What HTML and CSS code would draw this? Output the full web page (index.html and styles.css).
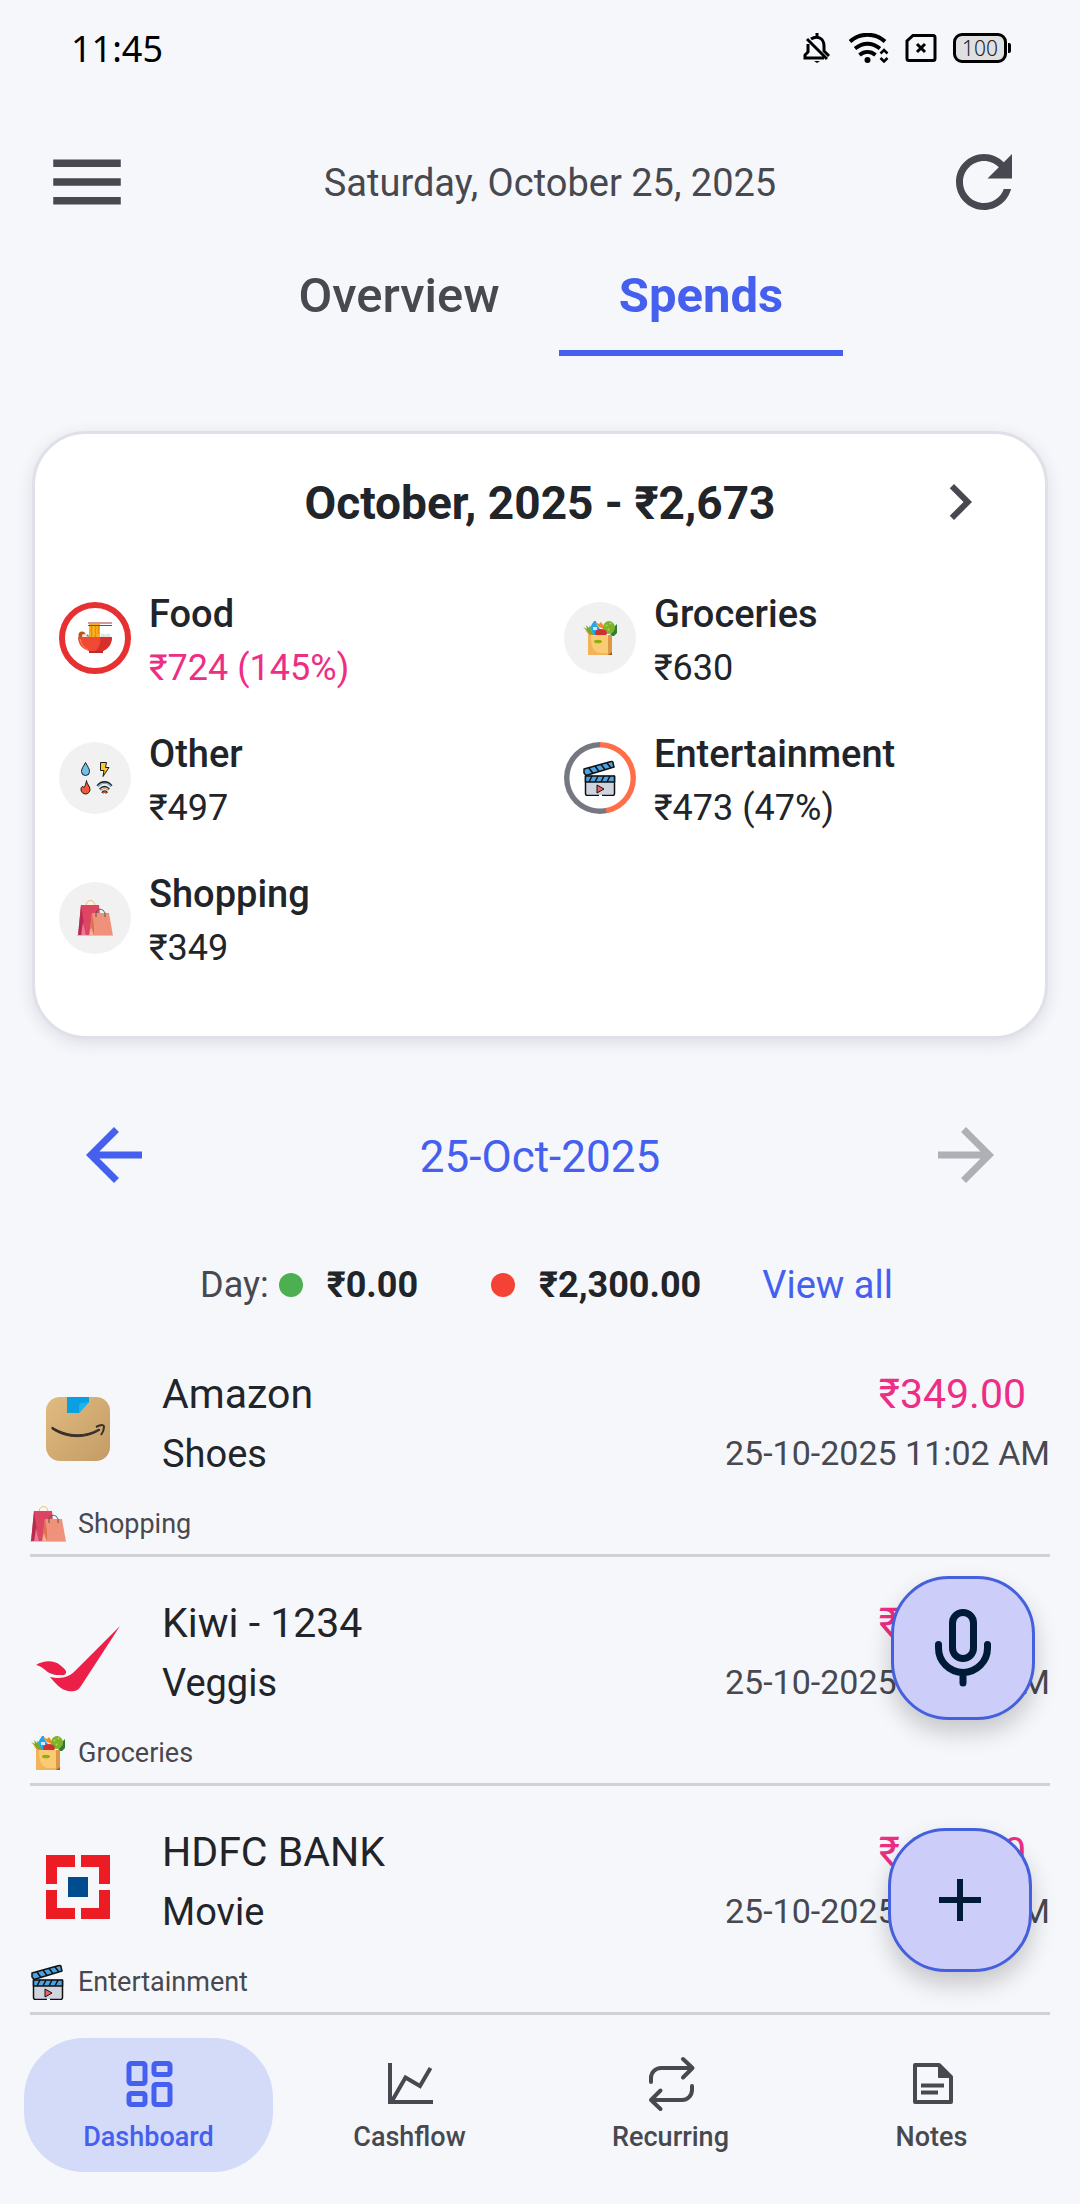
FILE: index.html
```html
<!DOCTYPE html>
<html lang="en">
<head>
<meta charset="utf-8">
<meta name="viewport" content="width=device-width, initial-scale=1">
<title>Spends</title>
<link rel="stylesheet" href="styles.css">
</head>
<body>
<svg class="sprite" aria-hidden="true">
  <symbol id="food" viewBox="0 0 36 36">
    <path d="M12 4h11v14H12z" fill="#f9b01e"/>
    <path d="M14 5l1 3-1 3 1 3-1 3M18 5l1 3-1 3 1 3-1 3M21 5l1 3-1 3 1 3" fill="none" stroke="#dd8410" stroke-width="1"/>
    <path d="M11 3h24M11 5.500h24" stroke="#a8352f" stroke-width="1"/>
    <circle cx="5" cy="15" r="3.500" fill="#b3591d"/>
    <circle cx="7" cy="16" r="2" fill="#fbe9df"/>
    <path d="M9 16l2-2 1 3z" fill="#4c9a3c"/>
    <circle cx="26" cy="16" r="2.500" fill="#dfe3e6"/><circle cx="31" cy="16" r="2.500" fill="#dfe3e6"/>
    <path d="M1 17h34c0 7-4 12-9 14v2H12v-2C5 29 1 24 1 17z" fill="#f04a35"/>
    <path d="M23 17h12c0 7-4 12-9 14h-8c4-3 6-8 5-14z" fill="#d7302c"/>
    <path d="M3 19c1 5 4 9 8 11" fill="none" stroke="#ff8165" stroke-width="1"/>
    <path d="M12 31h14v2H12z" fill="#b92c2b"/>
  </symbol>
  <symbol id="groceries" viewBox="0 0 36 36">
    <path d="M1 7l4 2-1-4 3 3 1-3 1 5 3 5H7L5 11z" fill="#78a81e"/>
    <path d="M3 10l9 6H8z" fill="#f28c1c"/>
    <path d="M10 4l2-3h2l1 4 3 4v7h-6l-4-8z" fill="#24a5ec"/>
    <path d="M11 7h4v3h-4z" fill="#c9edff"/>
    <path d="M13 2l4 2 2-2 2 3 3 5-7-3z" fill="#f58a20"/>
    <path d="M31 8l4-4v9l-3 3h-4z" fill="#2f7d32"/>
    <ellipse cx="27" cy="7.500" rx="6" ry="6.500" fill="#7db32b"/>
    <path d="M24 5l1 1M28 3l1 1M26 9l1 1" stroke="#b2d957" stroke-width="2"/>
    <ellipse cx="19" cy="13" rx="6" ry="4" fill="#d1302f"/>
    <path d="M6 15h24v20H6z" fill="#fbcb73"/>
    <path d="M26 15h4v20h-4z" fill="#dd9846"/>
    <path d="M6 15h3c0 11 2 16 8 18h9v2H6z" fill="#f1b45a"/>
    <path d="M26 35l4-3v3z" fill="#a9562a"/>
    <ellipse cx="16" cy="21.500" rx="4" ry="1.800" fill="#8fae0f"/>
  </symbol>
  <symbol id="other" viewBox="0 0 36 36">
    <g stroke="#1c1c1c" stroke-width="1" stroke-linejoin="round">
      <path d="M8.500 2.500c2 4 4 6 4 9a4 4 0 0 1-8 0c0-3 2-5 4-9z" fill="#6fc0ec"/>
      <path d="M23.500 2.500h6l-1 5h3.500l-6 9 1-6h-3.500z" fill="#f8c92b"/>
      <path d="M9.500 20.500c0 4 3.500 5 3.500 9a4.500 4.500 0 0 1-9 0c0-3 2-4 3-2 1-1 2-4 2.500-7z" fill="#f2593a"/>
    </g>
    <g fill="none" stroke-width="2.600" stroke="#1c1c1c">
      <path d="M20.500 26c4-5 10-5 14 0M23 29.500c3-3 6-3 9 0M25.500 33c1-2 3-2 4.500 0"/>
    </g>
    <g fill="none" stroke-width="1.200">
      <path d="M21 26c4-4 9-4 13 0" stroke="#79c2ee"/>
      <path d="M23.500 29.500c3-2.500 5-2.500 8 0" stroke="#ffd9a0"/>
      <path d="M26 33c1-1.500 2.500-1.500 3.500 0" stroke="#f2593a"/>
    </g>
  </symbol>
  <symbol id="shopping" viewBox="0 0 36 36">
    <path d="M9 9V5c1-6 8-6 9 0v4" fill="none" stroke="#eec068" stroke-width="1"/>
    <path d="M4 5h18l3 31H1z" fill="#dc4663"/>
    <path d="M4 5l3 20-2 11H1z" fill="#b62c50"/>
    <path d="M6 22l3 14H4z" fill="#ed7894"/>
    <path d="M15 13h17l4 23H12z" fill="#f0917b"/>
    <path d="M15 13l2 12v11h-5z" fill="#e07054"/>
    <path d="M14 27l3 9h-5z" fill="#f7b29c"/>
    <path d="M19 17v-4c1-5 7-5 9 0v4" fill="none" stroke="#446341" stroke-width="1"/>
    <path d="M0 35.500h36" stroke="#f6b6aa" stroke-width="1"/>
  </symbol>
  <symbol id="entertainment" viewBox="0 0 36 36">
    <g stroke="#111" stroke-width="1.500" stroke-linejoin="round">
      <path d="M3.500 16.500h29v17a2 2 0 0 1-2 2h-25a2 2 0 0 1-2-2z" fill="#d0d4df"/>
      <path d="M3.500 16h29v6h-29z" fill="#4ba3e3"/>
      <path d="M2 9L29 1.500a1.500 1.500 0 0 1 2 1.500l1 4L4 15.500 2 13z" fill="#4ba3e3"/>
      <path d="M7 22l3-6M13 22l3-6M19 22l3-6M25 22l3-6M7 8l4 5.500M13 6l4 5.500M19 4.500l4 5M25 3l4 5" fill="none"/>
      <path d="M15 25v8l7-4z" fill="#ee6063" stroke-width="1"/>
    </g>
    <path d="M17 35.500h3" stroke="#fff" stroke-width="2"/>
  </symbol>
  <symbol id="arrow-back" viewBox="0 0 24 24">
    <path d="M20 11H7.830l5.590-5.590L12 4l-8 8 8 8 1.410-1.410L7.830 13H20v-2z"/>
  </symbol>
  <symbol id="arrow-forward" viewBox="0 0 24 24">
    <path d="M12 4l-1.410 1.410L16.170 11H4v2h12.170l-5.580 5.590L12 20l8-8z"/>
  </symbol>
</svg>

<div class="app">
  <div class="status">
    <span class="clock">11:45</span>
    <div class="status-icons">
      <svg width="30" height="30" viewBox="0 0 30 30" fill="none" stroke="#000" stroke-width="3">
        <path d="M14 0v4M8 6c6-4 13-1 13 7v5l5 5M5 11v8l-3 3v3h19M4 6l20 20"/>
        <path d="M11 28h6l-3 2z" fill="#000" stroke="none"/>
      </svg>
      <svg width="40" height="30" viewBox="0 0 40 30" fill="none" stroke="#000" stroke-width="4">
        <path d="M1 8.500c10-9 25-9 35 0M6 15.500c8-6 17-6 25 0M10.500 22c5-4 11-4 16 0"/>
        <circle cx="18.500" cy="27" r="3" fill="#000" stroke="none"/>
        <path d="M31.500 20.500l3.500-3.500 3.500 3.500M31.500 25l3.500 3.500 3.500-3.500" stroke-width="2.500"/>
      </svg>
      <svg width="32" height="30" viewBox="0 0 32 30" fill="none" stroke="#000" stroke-width="3">
        <path d="M8 2.500h20a2 2 0 0 1 2 2v21a2 2 0 0 1-2 2H4a2 2 0 0 1-2-2V8z"/>
        <path d="M12 11l8 8M20 11l-8 8"/>
      </svg>
      <span class="battery">100</span>
    </div>
  </div>

  <header class="topbar">
    <button class="icon-btn" aria-label="Menu">
      <svg width="90" height="90" viewBox="0 0 24 24"><path d="M3 18h18v-2H3v2zm0-5h18v-2H3v2zm0-7v2h18V6H3z"/></svg>
    </button>
    <p class="today">Saturday, October 25, 2025</p>
    <button class="icon-btn" aria-label="Refresh">
      <svg width="84" height="84" viewBox="0 0 24 24"><path d="M17.650 6.350C16.200 4.900 14.210 4 12 4c-4.420 0-7.990 3.580-7.990 8s3.570 8 7.990 8c3.730 0 6.840-2.550 7.730-6h-2.080c-.820 2.330-3.040 4-5.650 4-3.310 0-6-2.690-6-6s2.690-6 6-6c1.660 0 3.140.690 4.220 1.780L13 11h7V4l-2.350 2.350z"/></svg>
    </button>
  </header>

  <div class="tabs" role="tablist">
    <button class="tab" role="tab" aria-selected="false">Overview</button>
    <button class="tab tab-active" role="tab" aria-selected="true">Spends</button>
  </div>

  <main>
    <section class="card">
      <div class="card-head">
        <h2>October, 2025 - ₹2,673</h2>
        <button class="icon-btn" aria-label="Month details">
          <svg width="72" height="72" viewBox="0 0 24 24"><path d="M10 6L8.590 7.410 13.170 12l-4.580 4.590L10 18l6-6z"/></svg>
        </button>
      </div>
      <ul class="categories">
        <li class="category">
          <span class="badge badge-over"><svg class="emoji"><use href="#food"/></svg></span>
          <div><h3>Food</h3><p class="spent">₹724 (145%)</p></div>
        </li>
        <li class="category">
          <span class="badge"><svg class="emoji"><use href="#groceries"/></svg></span>
          <div><h3>Groceries</h3><p>₹630</p></div>
        </li>
        <li class="category">
          <span class="badge"><svg class="emoji"><use href="#other"/></svg></span>
          <div><h3>Other</h3><p>₹497</p></div>
        </li>
        <li class="category">
          <span class="badge badge-ring" style="--used: 47%"><svg class="emoji"><use href="#entertainment"/></svg></span>
          <div><h3>Entertainment</h3><p>₹473 (47%)</p></div>
        </li>
        <li class="category">
          <span class="badge"><svg class="emoji"><use href="#shopping"/></svg></span>
          <div><h3>Shopping</h3><p>₹349</p></div>
        </li>
      </ul>
    </section>

    <div class="day-nav">
      <button class="icon-btn day-prev" aria-label="Previous day"><svg width="84" height="84"><use href="#arrow-back"/></svg></button>
      <button class="day-date">25-Oct-2025</button>
      <button class="icon-btn day-next" aria-label="Next day" disabled><svg width="84" height="84"><use href="#arrow-forward"/></svg></button>
    </div>

    <div class="day-totals">
      <span class="day-label">Day:</span>
      <span class="dot dot-in"></span>
      <strong>₹0.00</strong>
      <span class="dot dot-out"></span>
      <strong>₹2,300.00</strong>
      <a href="#all">View all</a>
    </div>

    <ul class="entries">
      <li class="entry">
        <div class="entry-main">
          <svg class="logo" viewBox="0 0 96 96">
            <defs>
              <linearGradient id="box" x1="0" y1="0" x2="1" y2="1"><stop offset="0" stop-color="#e0bb80"/><stop offset="1" stop-color="#c49b66"/></linearGradient>
            </defs>
            <rect x="16" y="16" width="64" height="64" rx="14" fill="url(#box)"/>
            <path d="M37 16h22v5L49 32H37z" fill="#0a9ee2"/>
            <path d="M59 21L49 32v-7q0-3 3-3z" fill="#19b4f2"/>
            <path d="M22 46c16 10 33 10 47 2l1 1C56 58 37 58 22 48z" fill="#36302a" stroke="#36302a"/>
            <path d="M66 46c6-3 8-2 8 0s0 4-3 8" fill="none" stroke="#36302a" stroke-width="2"/>
          </svg>
          <div class="entry-text"><h3>Amazon</h3><p>Shoes</p></div>
          <div class="entry-side"><p class="amount">₹349.00</p><time>25-10-2025 11:02 AM</time></div>
        </div>
        <div class="entry-tag"><svg class="emoji"><use href="#shopping"/></svg>Shopping</div>
      </li>
      <li class="entry">
        <div class="entry-main">
          <svg class="logo" viewBox="0 0 96 96" fill="#ec1f49">
            <path d="M90 16L51 76c-3 5-8 6-13 5-7-1-13-8-18-14 11 2 18 1 25-6z"/>
            <path d="M6 55c8-5 18-5 24 0 3 3 7 5 6 8-1 3-4 2-7 2-13 0-12-7-23-10z"/>
          </svg>
          <div class="entry-text"><h3>Kiwi - 1234</h3><p>Veggis</p></div>
          <div class="entry-side"><p class="amount">₹630.00</p><time>25-10-2025 10:58 AM</time></div>
        </div>
        <div class="entry-tag"><svg class="emoji"><use href="#groceries"/></svg>Groceries</div>
      </li>
      <li class="entry">
        <div class="entry-main">
          <svg class="logo" viewBox="0 0 96 96">
            <path d="M16 16h29v12H27v17H16zM51 16h29v29H69V28H51zM16 51h11v18h18v11H16zM69 51h11v29H51V69h18z" fill="#ed1c24"/>
            <path d="M38 38h20v20H38z" fill="#004c8f"/>
          </svg>
          <div class="entry-text"><h3>HDFC BANK</h3><p>Movie</p></div>
          <div class="entry-side"><p class="amount">₹473.00</p><time>25-10-2025 10:56 AM</time></div>
        </div>
        <div class="entry-tag"><svg class="emoji"><use href="#entertainment"/></svg>Entertainment</div>
      </li>
    </ul>
  </main>

  <button class="fab fab-mic" aria-label="Voice entry">
    <svg width="64" height="80" viewBox="0 0 64 80" fill="none" stroke="#001b38" stroke-width="7" stroke-linecap="round">
      <rect x="21.500" y="4.500" width="21" height="46" rx="10.500"/>
      <path d="M7.500 36.500V40a24.500 24.500 0 0 0 49 0v-3.500M32 65v10"/>
    </svg>
  </button>
  <button class="fab fab-add" aria-label="Add entry">
    <svg width="42" height="42" viewBox="0 0 42 42" stroke="#001b38" stroke-width="6"><path d="M21 0v42M0 21h42"/></svg>
  </button>

  <nav class="bottom-nav">
    <a class="nav-item nav-active" href="#dashboard" aria-current="page">
      <svg width="60" height="60" viewBox="0 0 60 60" fill="none" stroke="currentColor" stroke-width="5">
        <rect x="10" y="9.500" width="16" height="20" rx="2"/><rect x="35" y="9.500" width="16" height="11" rx="2"/>
        <rect x="10" y="39.500" width="16" height="11" rx="2"/><rect x="35" y="30.500" width="16" height="20" rx="2"/>
      </svg>
      Dashboard
    </a>
    <a class="nav-item" href="#cashflow">
      <svg width="60" height="60" viewBox="0 0 60 60" fill="none" stroke="currentColor" stroke-width="4">
        <path d="M10 9v39h43M12 47l13.500-23.500L40 32l10.500-18"/>
      </svg>
      Cashflow
    </a>
    <a class="nav-item" href="#recurring">
      <svg width="60" height="60" viewBox="0 0 60 60" fill="none" stroke="currentColor" stroke-width="4" stroke-linecap="round" stroke-linejoin="round">
        <path d="M10 28v-4a10 10 0 0 1 10-10h31M42 5l9.500 9-9.500 9.500M51 32v4a10 10 0 0 1-10 10H10M19.500 36.500L10 46l9.500 9"/>
      </svg>
      Recurring
    </a>
    <a class="nav-item" href="#notes">
      <svg width="60" height="60" viewBox="0 0 60 60" fill="none" stroke="currentColor" stroke-width="4" stroke-linejoin="round">
        <path d="M13 11h24l12 12v25H13z"/><path d="M37 11v12h12z" fill="currentColor" stroke-width="2"/>
        <path d="M19 31.500h23M19 38.500h17"/>
      </svg>
      Notes
    </a>
  </nav>
</div>
</body>
</html>
```
FILE: styles.css
```css
* {
  box-sizing: border-box;
}

body {
  margin: 0;
  background: #f6f7fb;
  color: #212429;
  font-family: Roboto, "Noto Sans", sans-serif;
  font-size: 36px;
}

h2, h3, p, ul {
  margin: 0;
  padding: 0;
  font-weight: 400;
}

ul {
  list-style: none;
}

button {
  padding: 0;
  border: 0;
  background: none;
  color: inherit;
  font: inherit;
}

a {
  text-decoration: none;
}

svg {
  display: block;
}

.sprite {
  position: absolute;
  width: 0;
  height: 0;
}

.app {
  position: relative;
  display: flex;
  flex-direction: column;
  min-height: 100vh;
}

.emoji {
  flex: none;
  width: 36px;
  height: 36px;
}

.icon-btn {
  fill: #474850;
}

/* Status bar */
.status {
  display: flex;
  align-items: center;
  justify-content: space-between;
  height: 96px;
  padding: 0 69px 0 71px;
}

.clock {
  color: #000;
  font-family: "Noto Sans", sans-serif;
  font-size: 36px;
}

.status-icons {
  display: flex;
  align-items: center;
  gap: 16px;
}

.battery {
  position: relative;
  width: 54px;
  height: 30px;
  margin-right: 4px;
  border: 3px solid #000;
  border-radius: 9px;
  background: #dfe0e2;
  color: #222;
  font-family: "Noto Sans", sans-serif;
  font-size: 21px;
  font-weight: 300;
  line-height: 24px;
  text-align: center;
}

.battery::after {
  content: "";
  position: absolute;
  top: 7px;
  right: -7px;
  width: 3px;
  height: 10px;
  border-radius: 0 2px 2px 0;
  background: #000;
}

/* Header */
.topbar {
  display: grid;
  grid-template-columns: auto 1fr auto;
  align-items: center;
  height: 164px;
  padding: 7px 54px 0 42px;
}

.today {
  padding: 3px 0 0 26px;
  color: #474850;
  font-size: 38px;
  text-align: center;
}

.tabs {
  display: flex;
  justify-content: center;
  gap: 18px;
  padding-left: 20px;
}

.tab {
  width: 284px;
  padding-bottom: 18px;
  border-bottom: 6px solid transparent;
  color: #474850;
  font-size: 49px;
  font-weight: 500;
  line-height: 72px;
}

.tab-active {
  border-color: #4560ee;
  color: #4560ee;
  font-weight: 700;
}

/* Month card */
.card {
  margin: 75px 32px 0;
  padding-bottom: 61px;
  border: 3px solid #e0e1e8;
  border-radius: 54px;
  background: #fff;
  box-shadow: 0 4px 16px rgba(40, 44, 70, 0.12);
}

.card-head {
  display: grid;
  grid-template-columns: 72px 1fr 72px;
  align-items: center;
  height: 136px;
  padding: 0 49px;
}

.card-head h2 {
  grid-column: 2;
  padding-top: 2px;
  font-size: 46px;
  font-weight: 700;
  text-align: center;
}

.categories {
  display: grid;
  grid-template-columns: 1fr 1fr;
  row-gap: 32px;
  padding-top: 17px;
}

.category {
  display: flex;
  align-items: center;
  gap: 18px;
  padding-left: 24px;
  line-height: 54px;
}

.category h3 {
  font-size: 38px;
  font-weight: 500;
}

.category .spent {
  color: #ee2d85;
}

.badge {
  display: grid;
  place-items: center;
  width: 72px;
  height: 72px;
  margin-bottom: 6px;
  border-radius: 50%;
  background: #f1f1f2;
}

.badge-over {
  border: 6px solid #e73031;
  background: #fff;
}

.badge-ring {
  background:
    radial-gradient(circle, #fff 30px, transparent 31px),
    conic-gradient(#ff6e48 var(--used), #757781 var(--used));
}

/* Day selector */
.day-nav {
  display: flex;
  align-items: center;
  justify-content: space-between;
  height: 104px;
  margin-top: 64px;
  padding: 0 72px;
}

.day-date {
  padding-top: 4px;
  color: #4560ee;
  font-size: 44px;
}

.day-prev {
  fill: #4560ee;
}

.day-next {
  fill: #aeb0b5;
}

.day-totals {
  display: flex;
  align-items: center;
  height: 56px;
  margin-top: 50px;
  padding-left: 200px;
}

.day-totals strong {
  margin: 0 73px 0 24px;
}

.day-totals strong + a {
  margin-left: -12px;
}

.day-totals a {
  color: #4560ee;
  font-size: 38px;
}

.day-label {
  margin-right: 10px;
  color: #474850;
}

.dot {
  width: 24px;
  height: 24px;
  border-radius: 50%;
}

.dot-in {
  background: #4caf50;
}

.dot-out {
  background: #f44336;
}

/* Entries */
.entries {
  margin: 15px 30px 0;
}

.entry {
  padding: 36px 0 12px;
  border-bottom: 3px solid #d0d1d6;
}

.entry-main {
  display: flex;
  line-height: 60px;
}

.logo {
  flex: none;
  width: 96px;
  height: 96px;
  margin: 17px 36px 0 0;
}

.entry-text {
  flex: 1;
  font-size: 38px;
}

.entry-text h3,
.amount {
  font-size: 41px;
}

.amount {
  padding-right: 24px;
  color: #ee2d85;
  text-align: right;
}

.entry time {
  display: block;
  color: #474850;
  font-size: 34px;
  line-height: 58px;
}

.entry-tag {
  display: flex;
  align-items: center;
  gap: 12px;
  margin-top: 22px;
  color: #474850;
  font-size: 27px;
  line-height: 36px;
}

/* Floating actions */
.fab {
  position: absolute;
  display: grid;
  place-items: center;
  width: 144px;
  height: 144px;
  border: 3px solid #4560dc;
  border-radius: 58px;
  background: #cccdf9;
  box-shadow: 0 12px 24px rgba(0, 0, 0, 0.2);
}

.fab-mic {
  right: 45px;
  bottom: 484px;
}

.fab-add {
  right: 48px;
  bottom: 232px;
}

/* Bottom navigation */
.bottom-nav {
  display: grid;
  grid-template-columns: repeat(4, 1fr);
  gap: 12px;
  margin-top: auto;
  padding: 23px 24px 32px;
}

.nav-item {
  display: flex;
  flex-direction: column;
  align-items: center;
  padding: 16px 0 12px;
  border-radius: 60px;
  color: #474850;
  font-size: 27px;
  font-weight: 500;
  line-height: 46px;
}

.nav-active {
  background: #d4dbf8;
  color: #4560ee;
}
```
